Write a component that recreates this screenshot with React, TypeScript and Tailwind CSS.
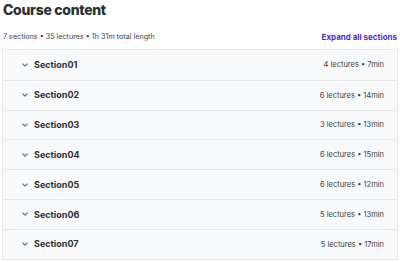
import React from "react";

const sections = [
  ["Section01", "4 lectures • 7min"],
  ["Section02", "6 lectures • 14min"],
  ["Section03", "3 lectures • 13min"],
  ["Section04", "6 lectures • 15min"],
  ["Section05", "6 lectures • 12min"],
  ["Section06", "5 lectures • 13min"],
  ["Section07", "5 lectures • 17min"],
];

function Chevron() {
  return (
    <svg width="8" height="8" viewBox="0 0 8 8" fill="none" className="text-[#6a6f73]">
      <path d="M1.8 3 L4 5.1 L6.2 3" stroke="currentColor" strokeWidth="1.1" strokeLinecap="round" strokeLinejoin="round" />
    </svg>
  );
}

export default function App() {
  return (
    <div className="w-[400px] h-[262px] bg-white px-[2px] text-[#2d2f31]" style={{ fontFamily: "Inter, 'Noto Sans', sans-serif" }}>
      <h2 className="text-[14px] font-extrabold leading-[18px] pt-[1px] pl-[1px] tracking-[-0.3px]">Course content</h2>
      <div className="flex items-center justify-between mt-[11px] h-[14px] pl-[1px] pr-[1px]">
        <span className="text-[7.2px] text-[#3e4143]">7 sections • 35 lectures • 1h 31m total length</span>
        <span className="text-[8px] font-bold text-[#5624d0]">Expand all sections</span>
      </div>
      <div className="mt-[5px] border border-[#e4e6e8] w-[396px]">
        {sections.map(([name, info], i) => (
          <div
            key={name}
            className={`flex items-center justify-between h-[29.8px] bg-[#f7f9fa] pl-[18px] pr-[13px] ${i > 0 ? "border-t border-[#e4e6e8]" : ""}`}
          >
            <div className="flex items-center gap-[5px]">
              <Chevron />
              <span className="text-[9px] font-bold">{name}</span>
            </div>
            <span className="text-[7.5px] text-[#3e4143]">{info}</span>
          </div>
        ))}
      </div>
    </div>
  );
}
